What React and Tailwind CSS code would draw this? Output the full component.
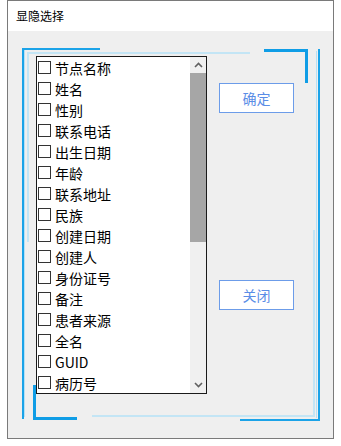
import React from 'react';

const fields = [
  '节点名称', '姓名', '性别', '联系电话', '出生日期', '年龄', '联系地址', '民族',
  '创建日期', '创建人', '身份证号', '备注', '患者来源', '全名', 'GUID', '病历号',
];

const font = { fontFamily: '"Noto Sans CJK SC", "Noto Sans", sans-serif' };

function Chevron({ up }) {
  return (
    <svg width="9" height="6" viewBox="0 0 9 6">
      <path
        d={up ? 'M1 5 L4.5 1.5 L8 5' : 'M1 1 L4.5 4.5 L8 1'}
        fill="none"
        stroke="#606060"
        strokeWidth="1.6"
      />
    </svg>
  );
}

function FieldList() {
  return (
    <div className="flex w-[171px] h-[338px] border border-[#1a1a1a] bg-white">
      <div className="flex-1 flex flex-col">
        {fields.map((f) => (
          <label key={f} className="flex items-center h-[21px] pl-[1px] gap-[4px] text-[14px] text-black leading-none">
            <span className="w-[13px] h-[13px] border border-[#333] bg-white shrink-0" />
            <span>{f}</span>
          </label>
        ))}
      </div>
      <div className="w-[16px] flex flex-col bg-[#f0f0f0]">
        <div className="h-[16px] flex items-center justify-center">
          <Chevron up />
        </div>
        <div className="h-[169px] bg-[#a6a6a6]" />
        <div className="flex-1" />
        <div className="h-[16px] flex items-center justify-center">
          <Chevron />
        </div>
      </div>
    </div>
  );
}

function Btn({ children }) {
  return (
    <button className="w-[75px] h-[30px] border border-[#6c9ce9] bg-white text-[14px] text-[#5a8de6] leading-none">
      {children}
    </button>
  );
}

export default function App() {
  return (
    <div className="w-[341px] h-[446px] bg-white" style={font}>
      <div className="ml-[7px] w-[327px] h-[439px] border border-[#7a7a7a] flex flex-col">
        <div className="h-[30px] bg-white flex items-center pl-[8px] text-[12px] text-black">
          显隐选择
        </div>
        <div className="relative flex-1 bg-[#efefef] flex pl-[28px] pt-[25px] gap-[12px]">
          {/* frame decoration */}
          <div className="absolute left-[14px] top-[17px] w-[2px] h-[371px] bg-[#1ba3e8]" />
          <div className="absolute left-[16px] top-[19px] w-[1px] h-[367px] bg-[#b6e0f5]" />
          <div className="absolute left-[14px] top-[17px] w-[78px] h-[2px] bg-[#1ba3e8]" />
          <div className="absolute left-[19px] top-[21px] w-[223px] h-[2px] bg-[#c3e5f5]" />
          <div className="absolute left-[19px] top-[21px] w-[2px] h-[190px] bg-[#c3e5f5]" />
          <div className="absolute left-[256px] top-[18px] w-[44px] h-[3px] bg-[#0f9de6]" />
          <div className="absolute left-[297px] top-[18px] w-[3px] h-[34px] bg-[#0f9de6]" />
          <div className="absolute left-[310px] top-[18px] w-[2px] h-[371px] bg-[#1ba3e8]" />
          <div className="absolute left-[308px] top-[20px] w-[1px] h-[367px] bg-[#b6e0f5]" />
          <div className="absolute left-[305px] top-[199px] w-[2px] h-[187px] bg-[#c3e5f5]" />
          <div className="absolute left-[84px] top-[384px] w-[223px] h-[2px] bg-[#c3e5f5]" />
          <div className="absolute left-[232px] top-[388px] w-[80px] h-[2px] bg-[#1ba3e8]" />
          <div className="absolute left-[25px] top-[354px] w-[3px] h-[35px] bg-[#0f9de6]" />
          <div className="absolute left-[25px] top-[386px] w-[44px] h-[3px] bg-[#0f9de6]" />

          <div className="relative">
            <FieldList />
          </div>
          <div className="relative flex flex-col pt-[27px] gap-[167px]">
            <Btn>确定</Btn>
            <Btn>关闭</Btn>
          </div>
        </div>
      </div>
    </div>
  );
}
